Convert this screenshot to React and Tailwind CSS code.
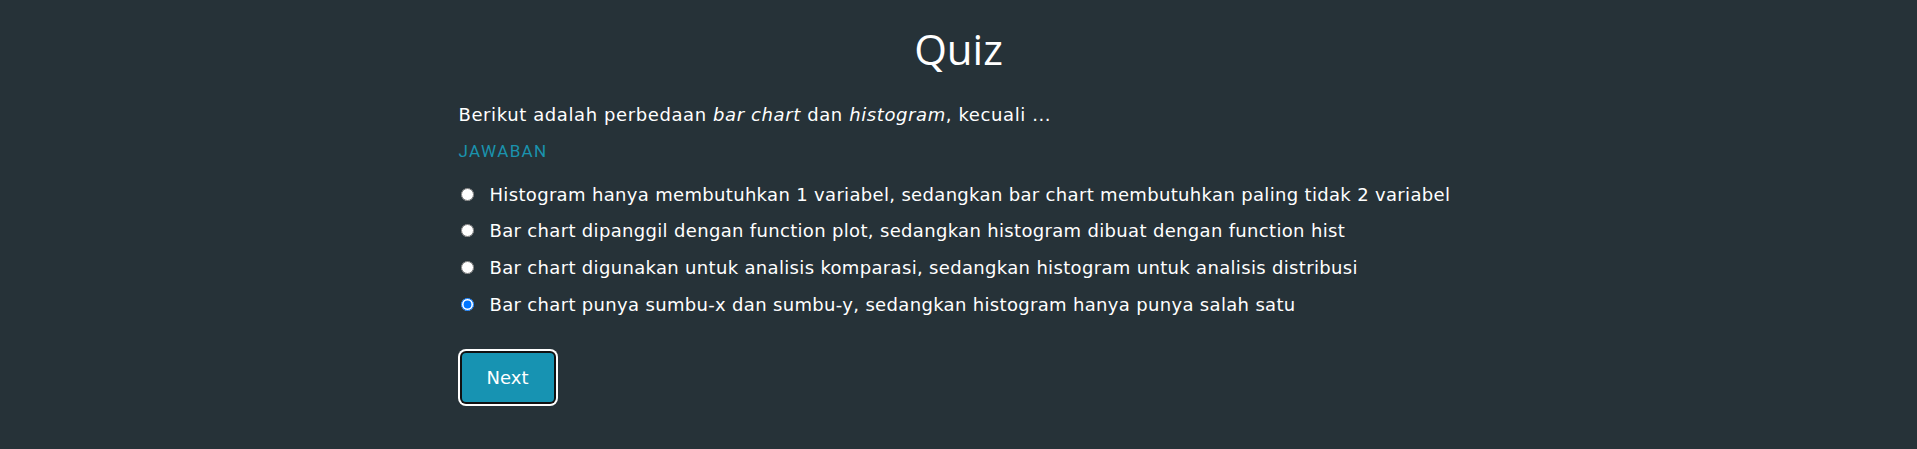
import { useState } from "react";

const options = [
  "Histogram hanya membutuhkan 1 variabel, sedangkan bar chart membutuhkan paling tidak 2 variabel",
  "Bar chart dipanggil dengan function plot, sedangkan histogram dibuat dengan function hist",
  "Bar chart digunakan untuk analisis komparasi, sedangkan histogram untuk analisis distribusi",
  "Bar chart punya sumbu-x dan sumbu-y, sedangkan histogram hanya punya salah satu",
];

export default function App() {
  const [answer, setAnswer] = useState(3);

  return (
    <div className="min-h-[449px] w-full bg-[#263238] text-white font-['DejaVu_Sans',sans-serif]">
      <div className="mx-auto max-w-[1000px] pt-[21px]">
        <h1 className="text-center text-[42px] font-medium leading-[56px] font-['Open_Sans',sans-serif]">Quiz</h1>

        <p className="mt-[24px] text-[18px] leading-[28px] tracking-[0.6px]">
          Berikut adalah perbedaan <em>bar chart</em> dan <em>histogram</em>, kecuali ...
        </p>

        <div className="mt-[10px] text-[17px] leading-[24px] uppercase text-[#1a93ae] font-['Roboto',sans-serif] tracking-[1.4px]">
          Jawaban
        </div>

        <div className="mt-[13px] flex flex-col">
          {options.map((opt, i) => (
            <label key={i} className="flex h-[36.6px] items-center whitespace-nowrap text-[18px] tracking-[0.33px] cursor-pointer">
              <input
                type="radio"
                name="jawaban"
                checked={answer === i}
                onChange={() => setAnswer(i)}
                className="ml-[2px] mr-[16px] h-[13px] w-[13px] shrink-0"
              />
              <span>{opt}</span>
            </label>
          ))}
        </div>

        {/* focus ring kept on like the screenshot */}
        <button className="mt-[31px] ml-[3px] h-[49px] w-[92px] rounded-[4px] bg-[#1793b2] text-[18px] text-white shadow-[0_0_0_2px_#111,0_0_0_4px_#fff]">
          Next
        </button>
      </div>
    </div>
  );
}
